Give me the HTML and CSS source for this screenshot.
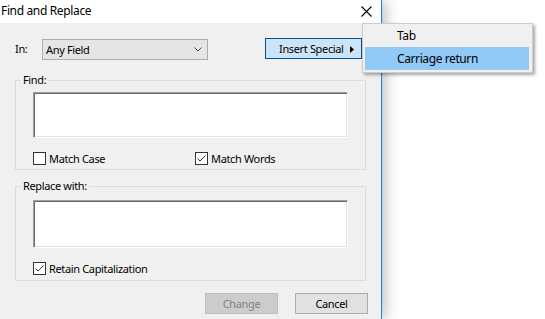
FILE: index.html
```html
<!DOCTYPE html>
<html lang="en">
<head>
<meta charset="utf-8">
<title>Find and Replace</title>
<link rel="stylesheet" href="styles.css">
</head>
<body>
<div class="screen">
  <div class="window">
    <div class="titlebar">
      <span class="title">Find and Replace</span>
      <svg class="close" width="11" height="11" viewBox="0 0 11 11"><path d="M0.5 0.5 L10.5 10.5 M10.5 0.5 L0.5 10.5" stroke="#000" stroke-width="1.1" fill="none"/></svg>
    </div>
    <div class="content">
      <div class="toprow">
        <span class="in-label">In:</span>
        <div class="combo">
          <span class="combo-text">Any Field</span>
          <svg class="chevron" width="8" height="5" viewBox="0 0 8 5"><path d="M0.5 0.5 L4 4 L7.5 0.5" stroke="#444" stroke-width="1" fill="none"/></svg>
        </div>
        <button class="btn special">Insert Special<svg class="tri" width="4" height="7" viewBox="0 0 4 7"><path d="M0 0 L4 3.5 L0 7 Z" fill="#000"/></svg></button>
      </div>

      <fieldset class="group group-find">
        <legend>Find:</legend>
        <div class="textbox tb-find"></div>
        <div class="checks">
          <label class="check col1"><span class="box"></span>Match Case</label>
          <label class="check"><span class="box"><svg width="11" height="11" viewBox="0 0 11 11"><path d="M1.5 5.5 L4 8 L9.5 2.5" stroke="#333" stroke-width="1" fill="none"/></svg></span>Match Words</label>
        </div>
      </fieldset>

      <fieldset class="group group-replace">
        <legend>Replace with:</legend>
        <div class="textbox tb-replace"></div>
        <div class="checks">
          <label class="check"><span class="box"><svg width="11" height="11" viewBox="0 0 11 11"><path d="M1.5 5.5 L4 8 L9.5 2.5" stroke="#333" stroke-width="1" fill="none"/></svg></span>Retain Capitalization</label>
        </div>
      </fieldset>

      <div class="actions">
        <button class="btn disabled" disabled>Change</button>
        <button class="btn">Cancel</button>
      </div>
    </div>
  </div>

  <div class="menu">
    <div class="menu-item">Tab</div>
    <div class="menu-item active">Carriage return</div>
  </div>
</div>
</body>
</html>
```

FILE: styles.css
```css
html, body {
  margin: 0;
  padding: 0;
  background: #ffffff;
}

body {
  font-family: "Noto Sans", "DejaVu Sans", sans-serif;
  font-size: 11px;
  letter-spacing: -0.35px;
  color: #000;
  width: 545px;
  height: 319px;
  overflow: hidden;
}

.screen {
  position: relative;
  width: 545px;
  height: 319px;
}

.window {
  width: 381px;
  height: 319px;
  border-right: 1px solid #2b7bd1;
  background: #f0f0f0;
  box-shadow: 3px 0 14px rgba(0, 0, 0, 0.28);
  display: flex;
  flex-direction: column;
}

.titlebar {
  height: 23px;
  background: #ffffff;
  display: flex;
  align-items: center;
  justify-content: space-between;
  padding-left: 1px;
}

.title {
  font-size: 12px;
  letter-spacing: -0.35px;
  line-height: 16px;
  margin-top: -1px;
}

.close {
  display: block;
  margin-right: 9px;
  margin-top: -1px;
}

.content {
  display: flex;
  flex-direction: column;
}

.toprow {
  display: flex;
  align-items: flex-start;
  margin-top: 15px;
  padding-left: 15px;
  height: 22px;
}

.in-label {
  width: 27px;
  line-height: 22px;
}

.combo {
  box-sizing: border-box;
  width: 166px;
  height: 21px;
  margin-top: 1px;
  background: #e5e5e5;
  border: 1px solid #adadad;
  display: flex;
  align-items: center;
  justify-content: space-between;
  padding: 0 5px 0 3px;
}

.combo-text {
  line-height: 19px;
}

.chevron {
  display: block;
}

.btn {
  box-sizing: border-box;
  font-family: inherit;
  font-size: 11px;
  letter-spacing: -0.35px;
  color: #000;
  height: 21px;
  width: 73px;
  background: #e1e1e1;
  border: 1px solid #adadad;
  border-radius: 0;
  padding: 0;
  margin: 0;
  line-height: 19px;
}

.btn.special {
  width: 97px;
  margin-left: 57px;
  background: #cce4f7;
  border-color: #005499;
  display: flex;
  align-items: center;
  padding-left: 13px;
}

.tri {
  display: block;
  margin-left: 6px;
  margin-top: 1px;
}

.group {
  box-sizing: border-box;
  width: 351px;
  margin: 0 0 0 15px;
  border: 1px solid #dcdcdc;
  padding: 5px 17px 4px 17px;
}

.group legend {
  padding: 0 2px;
  margin-left: -12px;
  line-height: 14px;
}

.group-find {
  margin-top: 13px;
}

.group-replace {
  margin-top: 9px;
  padding-top: 7px;
  padding-bottom: 5px;
}

.textbox {
  box-sizing: border-box;
  width: 315px;
  background: #ffffff;
  border: 1px solid;
  border-color: #a0a0a0 #ffffff #ffffff #a0a0a0;
  box-shadow: inset 1px 1px 0 #696969, inset -1px -1px 0 #e3e3e3;
}

.tb-find {
  height: 46px;
}

.tb-replace {
  height: 48px;
}

.checks {
  display: flex;
  margin-top: 14px;
  height: 13px;
}

.check {
  display: flex;
  align-items: center;
  height: 13px;
  line-height: 13px;
}

.check.col1 {
  width: 162px;
}

.box {
  box-sizing: border-box;
  width: 13px;
  height: 13px;
  border: 1px solid #333333;
  background: #ffffff;
  margin-right: 3px;
  display: flex;
  align-items: center;
  justify-content: center;
}

.box svg {
  display: block;
}

.actions {
  display: flex;
  justify-content: flex-end;
  gap: 17px;
  margin-top: 12px;
  padding-right: 13px;
}

.btn.disabled {
  background: #cccccc;
  border-color: #bfbfbf;
  color: #838383;
}

.menu {
  position: absolute;
  left: 362px;
  top: 23px;
  box-sizing: border-box;
  width: 171px;
  height: 50px;
  background: #f0f0f0;
  border: 1px solid #cccccc;
  padding: 0 3px 2px 2px;
  box-shadow: 2px 2px 3px rgba(0, 0, 0, 0.35);
  font-size: 12px;
  letter-spacing: -0.4px;
}

.menu-item {
  height: 23px;
  line-height: 23px;
  padding-left: 32px;
}

.menu-item.active {
  background: #91c9f7;
}
```
